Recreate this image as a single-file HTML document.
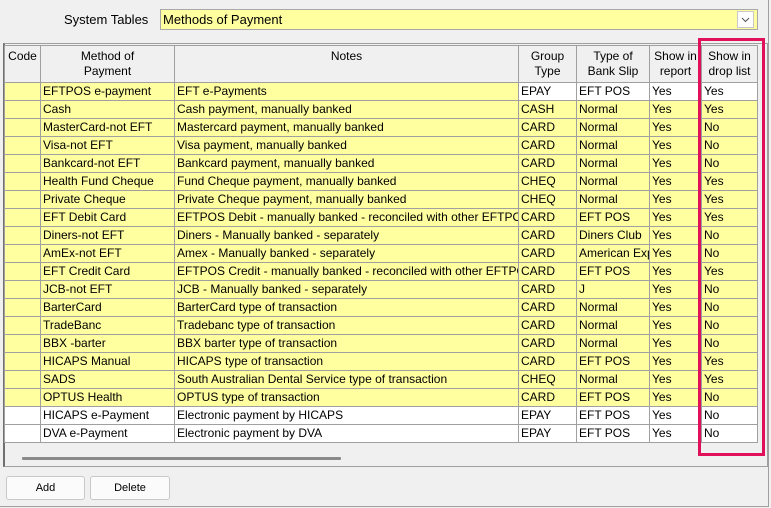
<!DOCTYPE html>
<html><head><style>
body{margin:0;width:771px;height:508px;background:#f0f0f0;font-family:"Liberation Sans",Arial,sans-serif;font-size:12px;position:relative;overflow:hidden;color:#000}
.abs{position:absolute}
table{border-collapse:collapse;table-layout:fixed;position:absolute;left:4px;top:45px;width:753px}
td{border:1px solid #a0a0a0;height:17px;padding:0 0 0 2px;white-space:nowrap;overflow:hidden;background:#ffffa0;line-height:17px}
th{border:1px solid #a0a0a0;font-weight:normal;height:33px;vertical-align:top;padding:3px 0 0 0;line-height:15px;background:#f0f0f0;overflow:hidden;white-space:nowrap}
tr.w td{background:#fff}
td.w{background:#fff}
.btn{position:absolute;top:476px;height:22px;border:1px solid #c8c8c8;border-radius:3px;background:#fbfbfb;text-align:center;line-height:22px;font-size:11px}
</style></head><body>
<div class="abs" style="left:0;top:0;width:768px;height:506px;border-right:1px solid #a0a0a0;border-bottom:1px solid #a0a0a0"></div>
<div class="abs" style="left:64px;top:12px;font-size:13px">System Tables</div>
<div class="abs" style="left:160px;top:9px;width:594px;height:19px;background:#ffffa0;border:1px solid #a8a8a8;font-size:13px;line-height:19px;padding-left:2px">Methods of Payment</div>
<div class="abs" style="left:737px;top:11px;width:15px;height:15px;background:#fff;border:1px solid #c8c8c8"><svg width="15" height="15"><path d="M4 6 L7.5 9.5 L11 6" fill="none" stroke="#555" stroke-width="1"/></svg></div>
<div class="abs" style="left:3px;top:43px;width:762px;height:422px;border:1px solid #a0a0a0;border-left:2px solid #707070;background:#f0f0f0"></div>
<table>
<colgroup><col style="width:36px"><col style="width:134px"><col style="width:344px"><col style="width:58px"><col style="width:73px"><col style="width:52px"><col style="width:56px"></colgroup>
<tr><th>Code</th><th>Method of<br>Payment</th><th>Notes</th><th>Group<br>Type</th><th>Type of<br>Bank Slip</th><th>Show in<br>report</th><th>Show in<br>drop list</th></tr>
<tr><td></td><td>EFTPOS e-payment</td><td>EFT e-Payments</td><td class="w">EPAY</td><td class="w">EFT POS</td><td class="w">Yes</td><td class="w">Yes</td></tr>
<tr><td></td><td>Cash</td><td>Cash payment, manually banked</td><td>CASH</td><td>Normal</td><td>Yes</td><td>Yes</td></tr>
<tr><td></td><td>MasterCard-not EFT</td><td>Mastercard payment, manually banked</td><td>CARD</td><td>Normal</td><td>Yes</td><td>No</td></tr>
<tr><td></td><td>Visa-not EFT</td><td>Visa payment, manually banked</td><td>CARD</td><td>Normal</td><td>Yes</td><td>No</td></tr>
<tr><td></td><td>Bankcard-not EFT</td><td>Bankcard payment, manually banked</td><td>CARD</td><td>Normal</td><td>Yes</td><td>No</td></tr>
<tr><td></td><td>Health Fund Cheque</td><td>Fund Cheque payment, manually banked</td><td>CHEQ</td><td>Normal</td><td>Yes</td><td>Yes</td></tr>
<tr><td></td><td>Private Cheque</td><td>Private Cheque payment, manually banked</td><td>CHEQ</td><td>Normal</td><td>Yes</td><td>Yes</td></tr>
<tr><td></td><td>EFT Debit Card</td><td>EFTPOS Debit - manually banked - reconciled with other EFTPOS</td><td>CARD</td><td>EFT POS</td><td>Yes</td><td>Yes</td></tr>
<tr><td></td><td>Diners-not EFT</td><td>Diners - Manually banked - separately</td><td>CARD</td><td>Diners Club</td><td>Yes</td><td>No</td></tr>
<tr><td></td><td>AmEx-not EFT</td><td>Amex - Manually banked - separately</td><td>CARD</td><td>American Express</td><td>Yes</td><td>No</td></tr>
<tr><td></td><td>EFT Credit Card</td><td>EFTPOS Credit - manually banked - reconciled with other EFTPOS</td><td>CARD</td><td>EFT POS</td><td>Yes</td><td>Yes</td></tr>
<tr><td></td><td>JCB-not EFT</td><td>JCB - Manually banked - separately</td><td>CARD</td><td>J</td><td>Yes</td><td>No</td></tr>
<tr><td></td><td>BarterCard</td><td>BarterCard type of transaction</td><td>CARD</td><td>Normal</td><td>Yes</td><td>No</td></tr>
<tr><td></td><td>TradeBanc</td><td>Tradebanc type of transaction</td><td>CARD</td><td>Normal</td><td>Yes</td><td>No</td></tr>
<tr><td></td><td>BBX -barter</td><td>BBX barter type of transaction</td><td>CARD</td><td>Normal</td><td>Yes</td><td>No</td></tr>
<tr><td></td><td>HICAPS Manual</td><td>HICAPS type of transaction</td><td>CARD</td><td>EFT POS</td><td>Yes</td><td>Yes</td></tr>
<tr><td></td><td>SADS</td><td>South Australian Dental Service type of transaction</td><td>CHEQ</td><td>Normal</td><td>Yes</td><td>Yes</td></tr>
<tr><td></td><td>OPTUS Health</td><td>OPTUS type of transaction</td><td>CARD</td><td>EFT POS</td><td>Yes</td><td>No</td></tr>
<tr class="w"><td></td><td>HICAPS e-Payment</td><td>Electronic payment by HICAPS</td><td>EPAY</td><td>EFT POS</td><td>Yes</td><td>No</td></tr>
<tr class="w"><td></td><td>DVA e-Payment</td><td>Electronic payment by DVA</td><td>EPAY</td><td>EFT POS</td><td>Yes</td><td>No</td></tr>
</table>
<div class="abs" style="left:22px;top:457px;width:319px;height:3px;background:#8a8a8a;border-radius:1px"></div>
<div class="abs" style="left:698px;top:38px;width:61px;height:412px;border:3px solid #e0105a"></div>
<div class="btn" style="left:6px;width:77px">Add</div>
<div class="btn" style="left:90px;width:78px">Delete</div>
</body></html>
